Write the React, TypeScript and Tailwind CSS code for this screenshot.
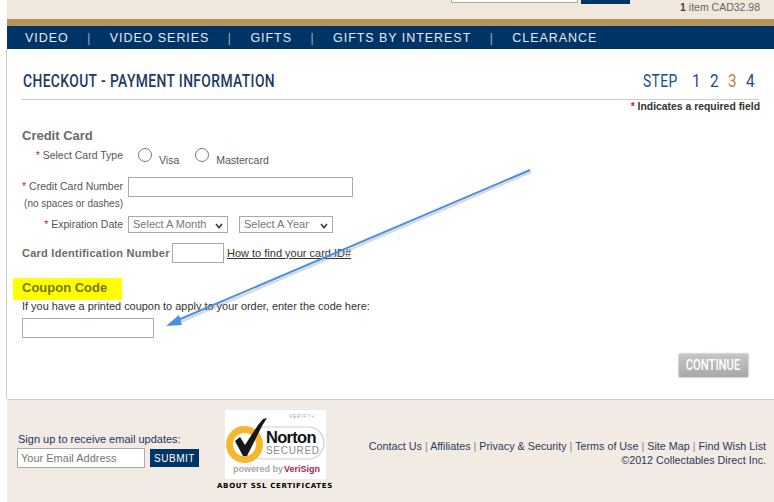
const NAV = ["VIDEO", "VIDEO SERIES", "GIFTS", "GIFTS BY INTEREST", "CLEARANCE"];
const FOOT = ["Contact Us", "Affiliates", "Privacy & Security", "Terms of Use", "Site Map", "Find Wish List"];

function Req() {
  return <span className="text-[#b03030]">* </span>;
}

function Chev() {
  return (
    <svg width="8" height="6" viewBox="0 0 8 6" className="mt-[3px]">
      <path d="M1 1 L4 4.5 L7 1" fill="none" stroke="#444" strokeWidth="1.8" />
    </svg>
  );
}

function Norton() {
  return (
    <svg width="101" height="69" viewBox="0 0 101 69" className="bg-white">
      <text x="64" y="8" fontSize="5" fontFamily="Liberation Sans" fill="#aaa" letterSpacing="0.7">VERIFY+</text>
      <rect x="22" y="17" width="77" height="32" rx="16" fill="#fff" stroke="#cfcfcf" strokeWidth="1.2" />
      <circle cx="19.5" cy="34.5" r="15" fill="#fff" stroke="#f5b72e" strokeWidth="7" />
      <polygon points="10,31 15,27 20,35 33,15 38,9 42,8 37,16 22,46 18,46" fill="#161616" />
      <text x="41" y="33" fontSize="16.5" fontWeight="700" fontFamily="Liberation Sans" fill="#111" letterSpacing="-0.7">Norton</text>
      <text x="41" y="44" fontSize="10" fontFamily="Liberation Sans" fill="#8a8a8a" letterSpacing="0.7">SECURED</text>
      <text x="8" y="62" fontSize="9" fontWeight="700" fontFamily="Liberation Sans" fill="#aaa">powered by</text>
      <text x="59" y="62" fontSize="9" fontWeight="700" fontFamily="Liberation Sans" fill="#a0285a">VeriSign</text>
    </svg>
  );
}

export default function App() {
  return (
    <div className="relative w-[774px] h-[502px] overflow-hidden bg-white font-['Liberation_Sans',Arial,sans-serif] text-[10.5px] text-[#555]">
      {/* header */}
      <div className="ml-[7px] h-[19px] bg-[#f0e8dd] flex justify-end relative">
        <div className="absolute left-[444px] top-0 w-[127px] h-[3px] bg-white border border-t-0 border-[#aaa]" />
        <div className="absolute left-[574px] top-0 w-[49px] h-[4px] bg-[#003366]" />
        <span className="mr-[14px] text-[10.5px] leading-[14px] text-[#666]"><b className="text-[#444]">1</b> item CAD32.98</span>
      </div>
      <div className="ml-[7px] h-[7px] bg-[#b59458]" />
      <nav className="ml-[7px] h-[23px] bg-[#003366] flex items-center pl-[18px] pt-[1px] text-[12.5px] tracking-[0.95px] text-[#e3ebf3]">
        {NAV.map((n, i) => (
          <span key={n} className="flex items-center">
            {i > 0 && <span className="mx-[18.5px] text-[#9fb4cc] text-[12px]">|</span>}
            {n}
          </span>
        ))}
      </nav>

      <main className="ml-[6px] border-l border-[#ccc] h-[350px] flex flex-col">
        <div className="mx-[15px] mt-[21px] h-[30px] border-b border-[#ccc] flex justify-between items-start">
          <h1 className="ml-[1px] text-[18px] leading-[22px] font-medium font-['Roboto'] scale-x-[0.77] origin-left text-[#1c3a63] tracking-[0.5px] whitespace-nowrap">CHECKOUT - PAYMENT INFORMATION</h1>
          <div className="mr-[4px] text-[18px] leading-[22px] text-[#234b8f] font-['Roboto'] flex">
            <span className="w-[49px] scale-x-[0.77] origin-left tracking-[0.5px]">STEP</span>
            <span className="w-[18px] scale-x-[0.85] origin-left">1</span>
            <span className="w-[18px] scale-x-[0.85] origin-left">2</span>
            <span className="w-[18px] scale-x-[0.85] origin-left text-[#b58a4c]">3</span>
            <span className="w-[9px] scale-x-[0.85] origin-left">4</span>
          </div>
        </div>
        <div className="mx-[14px] text-right text-[10.4px] leading-[14px] font-bold text-[#333]"><span className="text-[#b03030]">*</span> Indicates a required field</div>

        <div className="ml-[15px] mt-[14px]">
          <h2 className="text-[13px] leading-[16px] font-bold text-[#6b6b6b]">Credit Card</h2>
          <div className="flex items-start h-[20px] mt-[2px]">
            <span className="w-[101px] text-right mt-[2px]"><Req />Select Card Type</span>
            <span className="ml-[15px] mt-[2px] w-[14px] h-[14px] rounded-full border border-[#777] bg-white" />
            <span className="ml-[7px] mt-[7px]">Visa</span>
            <span className="ml-[16px] mt-[2px] w-[14px] h-[14px] rounded-full border border-[#777] bg-white" />
            <span className="ml-[7px] mt-[7px]">Mastercard</span>
          </div>
          <div className="flex items-center h-[20px] mt-[11px]">
            <span className="w-[101px] text-right"><Req />Credit Card Number</span>
            <input className="ml-[5px] w-[225px] h-[20px] border border-[#aaa] bg-white" />
          </div>
          <div className="w-[101px] text-right text-[10px] leading-[12px] mt-[1px] whitespace-nowrap">(no spaces or dashes)</div>
          <div className="flex items-center h-[17px] mt-[6px]">
            <span className="w-[101px] text-right"><Req />Expiration Date</span>
            <div className="ml-[5px] w-[100px] h-[17px] border border-[#aaa] flex items-center justify-between px-[4px] text-[11px] text-[#777]">Select A Month<Chev /></div>
            <div className="ml-[11px] w-[94px] h-[17px] border border-[#aaa] flex items-center justify-between px-[4px] text-[11px] text-[#777]">Select A Year<Chev /></div>
          </div>
          <div className="flex items-center h-[20px] mt-[10px]">
            <span className="w-[147px] font-bold text-[11px] tracking-[0.25px] text-[#6b6b6b] whitespace-nowrap">Card Identification Number</span>
            <input className="ml-[3px] w-[52px] h-[20px] border border-[#aaa] bg-white" />
            <a className="ml-[3px] text-[11px] underline text-[#333]">How to find your card ID#</a>
          </div>

          <div className="mt-[15px] -ml-[9px] w-[109px] h-[22px] bg-[#ffff00] pl-[9px] pb-[3px] flex items-center">
            <h2 className="text-[13px] font-bold text-[#7c7214]">Coupon Code</h2>
          </div>
          <p className="-mt-px text-[10.95px] leading-[14px] text-[#333]">If you have a printed coupon to apply to your order, enter the code here:</p>
          <input className="mt-[5px] block w-[132px] h-[20px] border border-[#aaa] bg-white" />
        </div>
        <div className="flex justify-end mr-[26px] mt-[16px]">
          <button className="w-[69px] h-[23px] bg-gradient-to-b from-[#c6c6c6] to-[#a8a8a8] shadow-[0_0_2px_#888] font-['Roboto'] text-[14px] font-medium text-white"><span className="inline-block scale-x-[0.8]">CONTINUE</span></button>
        </div>
      </main>

      {/* footer */}
      <footer className="ml-[7px] h-[103px] bg-[#f2ebe3] border-t border-[#d2cdc8] flex">
        <div className="ml-[10px] mt-[33px]">
          <div className="ml-[1px] text-[11px] leading-[13px] text-[#223366] whitespace-nowrap">Sign up to receive email updates:</div>
          <div className="flex mt-[2px]">
            <input readOnly value="Your Email Address" className="w-[128px] h-[20px] border border-[#aaa] bg-white px-[3px] text-[11px] text-[#777]" />
            <button className="ml-[5px] w-[49px] h-[18px] mt-[1px] bg-[#003366] text-white text-[10px] tracking-[0.5px]">SUBMIT</button>
          </div>
        </div>
        <div className="ml-[19px] mt-[10px] flex flex-col items-center w-[114px]">
          <Norton />
          <a className="mt-[2px] text-[7px] font-bold text-black tracking-[0.7px] whitespace-nowrap font-['DejaVu_Sans']">ABOUT SSL CERTIFICATES</a>
        </div>
        <div className="ml-auto mr-[8px] mt-[39px] text-right text-[10.75px] leading-[14px] text-[#2a3a5a]">
          <div className="whitespace-nowrap">
            {FOOT.map((f, i) => (
              <span key={f}>{i > 0 && <span className="text-[#888]"> | </span>}{f}</span>
            ))}
          </div>
          <div>©2012 Collectables Direct Inc.</div>
        </div>
      </footer>

      {/* annotation arrow */}
      <svg className="absolute left-0 top-0 pointer-events-none" width="774" height="502">
        <line x1="531" y1="172" x2="180" y2="322" stroke="#888" strokeWidth="2.5" opacity="0.3" />
        <line x1="530" y1="170" x2="178" y2="320" stroke="#4a90e2" strokeWidth="2" />
        <polygon points="166,326 179,315 182,325" fill="#4a90e2" />
      </svg>
    </div>
  );
}
